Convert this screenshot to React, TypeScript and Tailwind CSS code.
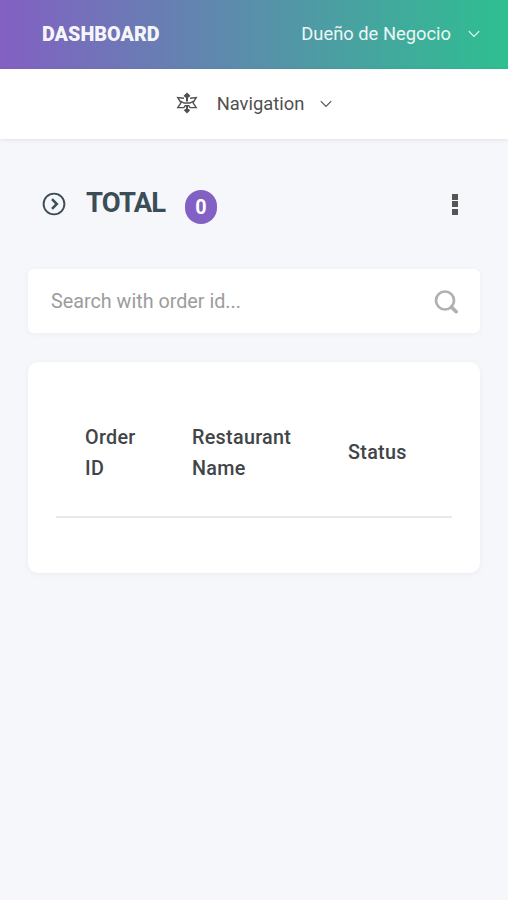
import { useState } from "react";

const columns = [
  { label: "Order ID", className: "w-[107px] pl-[29px] pr-6" },
  { label: "Restaurant Name", className: "w-[156px] pl-[29px] pr-5" },
  { label: "Status", className: "pl-[29px]" },
];

function ChevronIcon() {
  return (
    <svg width="12" height="8" viewBox="0 0 12 8" fill="none" stroke="currentColor" strokeWidth="1.1">
      <path d="M0.8 1.2 L6 6.4 L11.2 1.2" />
    </svg>
  );
}

function NavigationIcon() {
  return (
    <svg width="22" height="22" viewBox="0 0 22 22" fill="none" stroke="currentColor" strokeWidth="1.4">
      <path d="M11 3v6.5M11 14v5" strokeWidth="2" />
      <path d="M8 6.2L1.8 5.6 5 10.8 1.8 15.6H8M14 6.2l6.2-.6L17 10.8l3.2 4.8H14" />
      <path d="M4.5 9.2L8 11h6l3.5-1.8" />
      <path d="M8 15.6l1.2-2h3.6l1.2 2" />
      <path d="M11 0.4l3.4 3.4-1.6 1.6H9.2L7.6 3.8zM11 21.4l3.2-3.2-1.4-1.2H9.2l-1.4 1.2z" fill="currentColor" stroke="none" />
    </svg>
  );
}

function CircleRightIcon() {
  return (
    <svg width="24" height="24" viewBox="0 0 24 24" fill="none" stroke="currentColor">
      <circle cx="12" cy="12" r="10.4" strokeWidth="1.9" />
      <path d="M10 7.2l4.8 4.8-4.8 4.8" strokeWidth="2.5" />
    </svg>
  );
}

function SearchIcon() {
  return (
    <svg width="25" height="25" viewBox="0 0 25 25" fill="none" stroke="currentColor">
      <circle cx="11" cy="11.5" r="9" strokeWidth="2.7" />
      <path d="M17.4 17.9l4.8 4.8" strokeWidth="3.6" strokeLinecap="round" />
    </svg>
  );
}

export default function App() {
  const [search, setSearch] = useState("");

  return (
    <div className="min-h-screen bg-[#f5f7fb] font-[Roboto,sans-serif] text-[18.35px] leading-[31px] text-[#414548]">
      <header className="flex h-[69px] items-center justify-between bg-linear-to-r/srgb from-[#8360c3] to-[#2ebf91] pr-7 pl-[42px] text-white">
        <a href="#" className="pb-px text-[19.75px] font-black text-white/95">
          DASHBOARD
        </a>
        <button className="flex items-center gap-[17px] pb-0.5 text-white/90">
          <span className="pb-px">Dueño de Negocio</span>
          <ChevronIcon />
        </button>
      </header>

      <nav className="flex h-[70px] items-center justify-center bg-white shadow-[0_1px_4px_rgba(0,0,0,0.09)]">
        <button className="flex items-center text-[#505050]">
          <span className="pb-0.5">
            <NavigationIcon />
          </span>
          <span className="mr-4 ml-[19px] pb-0.5">Navigation</span>
          <ChevronIcon />
        </button>
      </nav>

      <main className="px-7">
        <div className="flex h-[130px] items-center pr-[22px] pl-3.5 text-[#3b4d55]">
          <CircleRightIcon />
          <h1 className="ml-5 w-[79px] pb-px text-[27.4px] font-bold tracking-[-0.8px]">TOTAL</h1>
          <span className="mt-1.5 ml-5 flex h-[34px] w-8 items-center justify-center rounded-full bg-[#8360c3] text-[19.75px] font-bold text-white">
            0
          </span>
          <button className="ml-auto flex flex-col gap-[1.5px]">
            <span className="h-1.5 w-1.5 bg-[#555]" />
            <span className="h-1.5 w-1.5 bg-[#555]" />
            <span className="h-1.5 w-1.5 bg-[#555]" />
          </button>
        </div>

        <div className="flex h-16 items-center rounded-md bg-white pr-[21px] pl-[23px] text-[#b0b0b0] shadow-[0_1px_6px_rgba(0,0,0,0.04)]">
          <input
            className="min-w-0 flex-1 pt-px text-[19.75px] outline-none placeholder:text-[#9c9c9c]"
            placeholder="Search with order id..."
            value={search}
            onChange={(e) => setSearch(e.target.value)}
          />
          <SearchIcon />
        </div>

        <section className="mt-[29px] h-[211px] rounded-[10px] bg-white p-7 shadow-[0_1px_6px_rgba(0,0,0,0.05)]">
          <table className="w-full table-fixed text-left text-[19.75px] tracking-[0.3px]">
            <thead>
              <tr className="h-[127px] border-b-2 border-[#e9e9e9]">
                {columns.map((column) => (
                  <th key={column.label} className={`pb-px font-medium ${column.className}`}>
                    {column.label}
                  </th>
                ))}
              </tr>
            </thead>
          </table>
        </section>
      </main>
    </div>
  );
}
